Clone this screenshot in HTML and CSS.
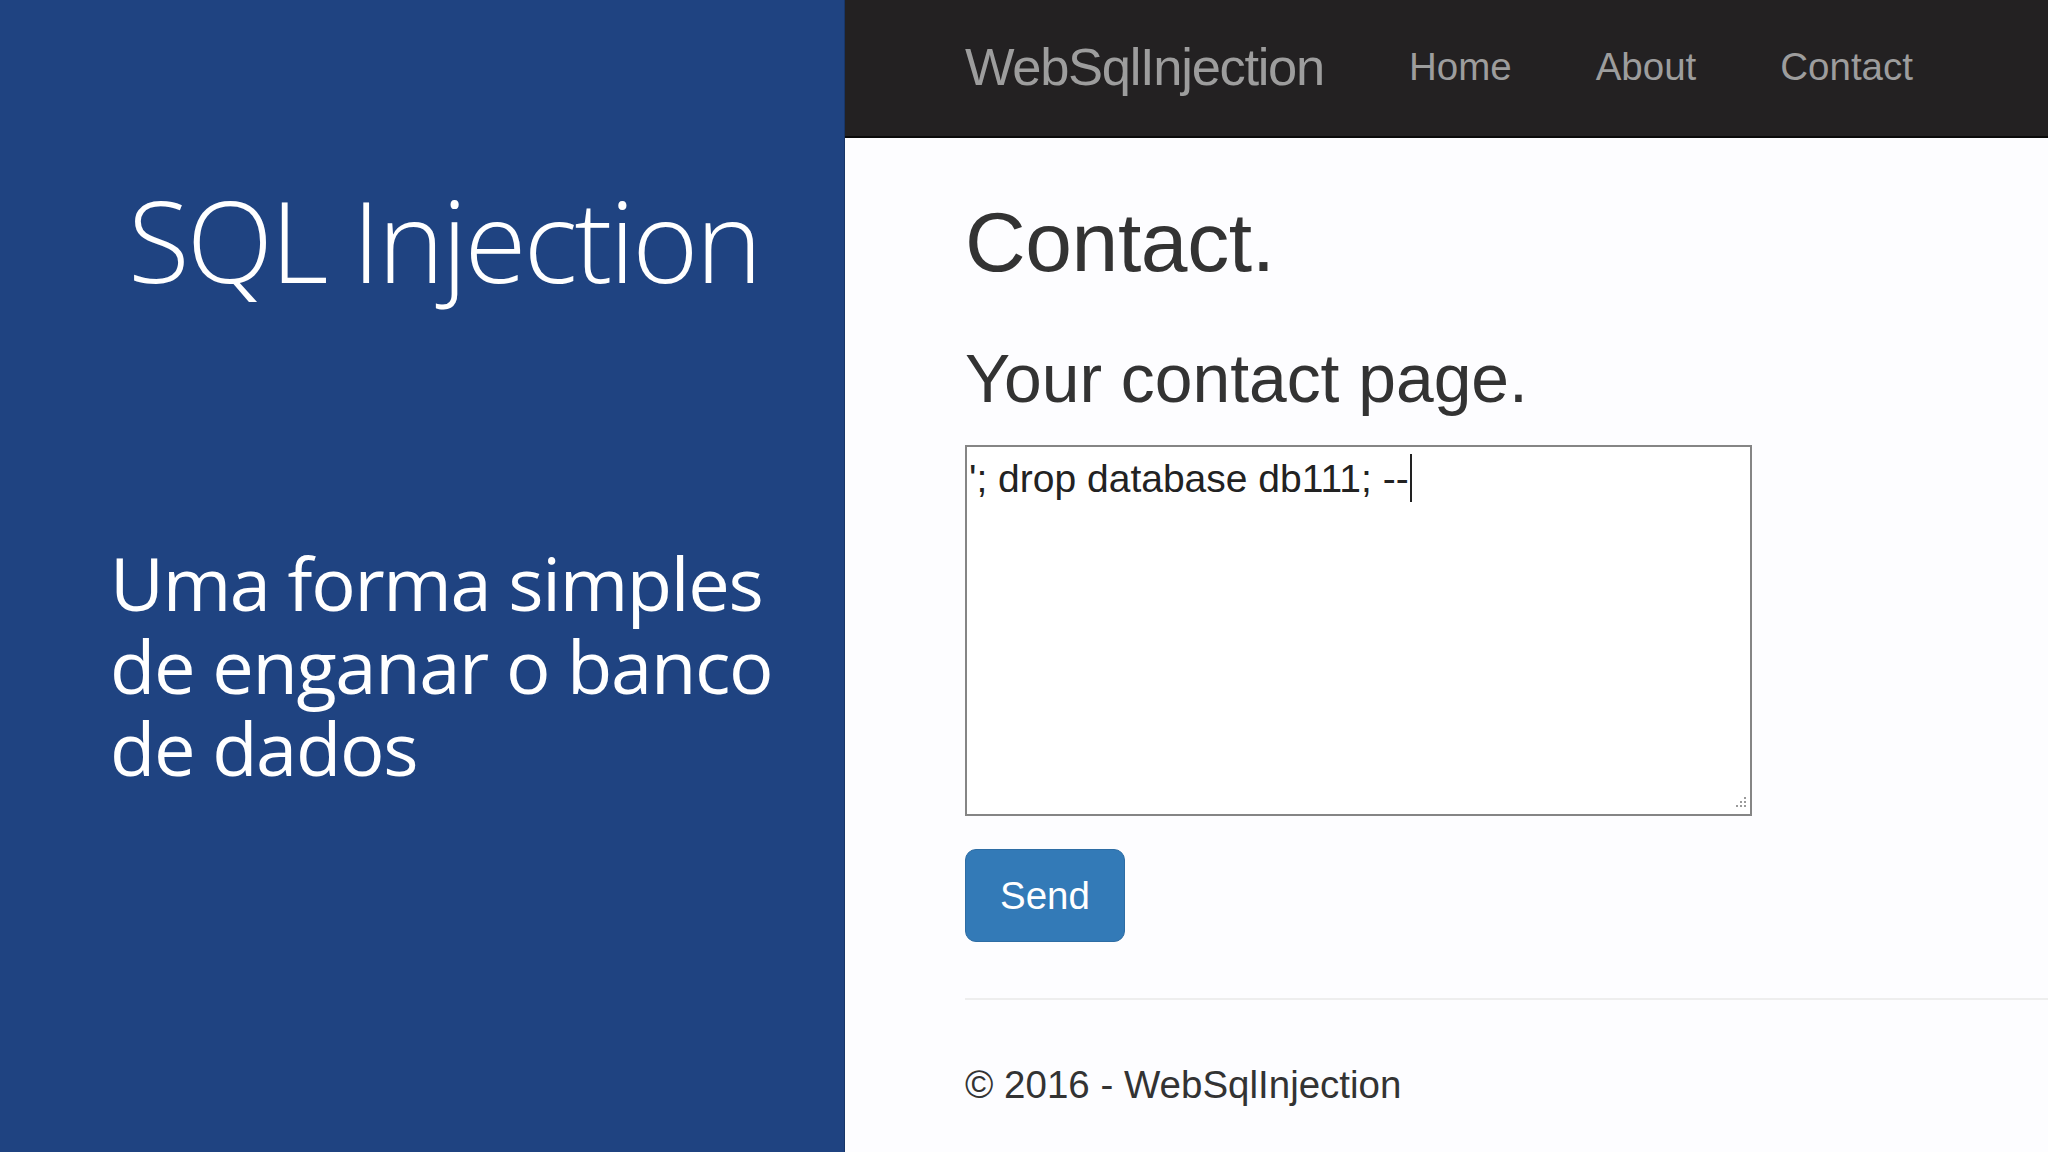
FILE: index.html
```html
<!DOCTYPE html>
<html lang="pt">
<head>
<meta charset="utf-8">
<title>SQL Injection</title>
<link rel="stylesheet" href="styles.css">
</head>
<body>
<div class="slide">
  <aside class="panel">
    <h1 class="panel-title">SQL Injection</h1>
    <p class="panel-text">Uma forma simples<br>de enganar o banco<br>de dados</p>
  </aside>
  <div class="site">
    <nav class="navbar">
      <div class="nav-inner">
        <a class="brand">WebSqlInjection</a>
        <ul class="nav-links">
          <li><a>Home</a></li>
          <li><a>About</a></li>
          <li><a>Contact</a></li>
        </ul>
      </div>
    </nav>
    <main class="content">
      <h2 class="page-title">Contact.</h2>
      <h3 class="page-sub">Your contact page.</h3>
      <div class="textarea">'; drop database db111; --<span class="caret"></span>
        <svg class="grip" width="14" height="14" viewBox="0 0 14 14">
          <rect x="11" y="0" width="2" height="2" fill="#9a9a9a"/>
          <rect x="7" y="4" width="2" height="2" fill="#9a9a9a"/>
          <rect x="11" y="4" width="2" height="2" fill="#9a9a9a"/>
          <rect x="3" y="8" width="2" height="2" fill="#9a9a9a"/>
          <rect x="7" y="8" width="2" height="2" fill="#9a9a9a"/>
          <rect x="11" y="8" width="2" height="2" fill="#9a9a9a"/>
        </svg>
      </div>
      <button class="btn">Send</button>
      <hr class="rule">
      <footer class="footer">© 2016 - WebSqlInjection</footer>
    </main>
  </div>
</div>
</body>
</html>
```
FILE: styles.css
```css
html, body {
  margin: 0;
  padding: 0;
}
body {
  width: 2048px;
  height: 1152px;
  overflow: hidden;
  background: #ffffff;
}
.slide {
  display: flex;
  height: 1152px;
}
.panel {
  width: 845px;
  flex: 0 0 845px;
  background: #1f4381;
  color: #ffffff;
  font-family: "Open Sans", "Noto Sans", sans-serif;
  padding: 183px 0 0 0;
  box-sizing: border-box;
  border-right: 1px solid #183668;
}
.panel-title {
  margin: 0 0 0 128px;
  font-size: 113px;
  font-weight: 300;
  line-height: 1;
  letter-spacing: -2.8px;
}
.panel-text {
  margin: 246px 0 0 110px;
  font-size: 74px;
  font-weight: 400;
  line-height: 82.5px;
  letter-spacing: -1.3px;
}
.site {
  flex: 1;
  min-width: 0;
  background: #fdfdff;
  font-family: "Liberation Sans", Arial, sans-serif;
  color: #333333;
}
.navbar {
  height: 138px;
  box-sizing: border-box;
  background: #232122;
  border-bottom: 2px solid #0a0a0a;
}
.nav-inner {
  display: flex;
  align-items: flex-start;
  padding-left: 120px;
}
.brand {
  color: #9d9d9d;
  font-size: 52.5px;
  letter-spacing: -1.3px;
  line-height: 1;
  padding-top: 41px;
  margin-right: 43px;
}
.nav-links {
  display: flex;
  list-style: none;
  margin: 0;
  padding: 0;
}
.nav-links a {
  display: block;
  color: #9d9d9d;
  font-size: 38.5px;
  line-height: 1;
  padding: 48px 42px 0 42px;
}
.content {
  padding-left: 120px;
  display: flex;
  flex-direction: column;
  align-items: flex-start;
}
.page-title {
  margin: 58px 0 0 0;
  font-size: 84px;
  font-weight: 400;
  letter-spacing: -0.4px;
  line-height: 1.1;
}
.page-sub {
  margin: 54px 0 0 0;
  font-size: 67.8px;
  font-weight: 400;
  line-height: 1.1;
}
.textarea {
  position: relative;
  margin-top: 28px;
  width: 787px;
  height: 371px;
  box-sizing: border-box;
  border: 2px solid #858585;
  background: #ffffff;
  padding: 4px 2px;
  font-size: 39px;
  line-height: 55px;
  color: #222222;
}
.caret {
  display: inline-block;
  width: 2px;
  height: 48px;
  margin-left: 1px;
  background: #222222;
  vertical-align: -10px;
}
.grip {
  position: absolute;
  right: 3px;
  bottom: 3px;
}
.btn {
  margin-top: 33px;
  width: 160px;
  height: 93px;
  border: 1px solid #2e6da4;
  border-radius: 11px;
  background: #337ab7;
  color: #ffffff;
  font-family: "Liberation Sans", Arial, sans-serif;
  font-size: 38.5px;
  line-height: 55px;
  padding: 0;
}
.rule {
  align-self: stretch;
  margin: 56px 0 0 0;
  border: 0;
  border-top: 2px solid #eeeeee;
  height: 0;
}
.footer {
  margin-top: 57px;
  font-size: 38.5px;
  line-height: 55px;
  color: #333333;
}
```
